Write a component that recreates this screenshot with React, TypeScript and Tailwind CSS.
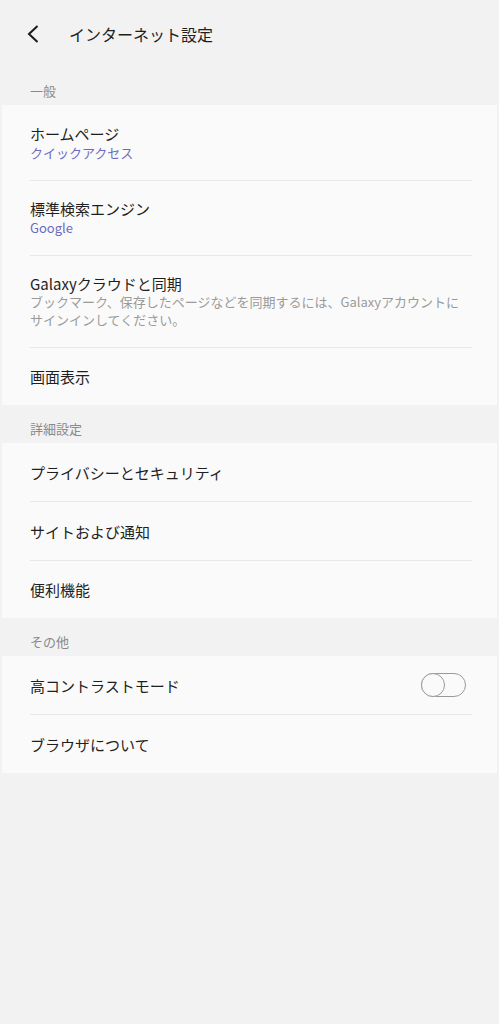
import React from 'react';

type Row = {
  title: string;
  sub?: string;
  desc?: string;
  toggle?: boolean;
  h: string;
};

const font = { fontFamily: '"Noto Sans CJK JP", "Noto Sans", sans-serif' };

function Toggle() {
  return (
    <div className="relative w-[45px] h-[24px] rounded-full border-[1.5px] border-[#9a9a9a]">
      <div className="absolute left-[-1.5px] top-[-1.5px] w-[24px] h-[24px] rounded-full border-[1.5px] border-[#9a9a9a] bg-[#fafafa]" />
    </div>
  );
}

function Section({ label, rows }: { label: string; rows: Row[] }) {
  return (
    <div>
      <div className="h-[38px] pl-[30px] pt-[15px] text-[13px] leading-[18px] text-[#8a8a8a]">{label}</div>
      <div className="mx-[2px] bg-[#fafafa] pl-[28px] pr-[25px]">
        {rows.map((r, i) => (
          <div key={i} className={`${r.h} flex items-center pr-[6px] ${i > 0 ? 'border-t border-[#e8e8e8]' : ''}`}>
            <div className="flex-1">
              <div className="text-[15px] leading-[19px] text-[#1f1f1f]">{r.title}</div>
              {r.sub && <div className="text-[13px] leading-[19px] text-[#6b6bc2]">{r.sub}</div>}
              {r.desc && <div className="text-[13px] leading-[18px] text-[#9a9a9a]">{r.desc}</div>}
            </div>
            {r.toggle && <Toggle />}
          </div>
        ))}
      </div>
    </div>
  );
}

export default function App() {
  return (
    <div className="min-h-[1024px] w-[499px] bg-[#f2f2f2]" style={font}>
      <div className="h-[67px] flex items-center">
        <svg className="ml-[27px] mr-[30px]" width="12" height="18" viewBox="0 0 12 18" fill="none">
          <path d="M10.5 1 L2 9 L10.5 17" stroke="#1a1a1a" strokeWidth="2" />
        </svg>
        <div className="text-[16px] text-[#1f1f1f]">インターネット設定</div>
      </div>
      <Section
        label="一般"
        rows={[
          { title: 'ホームページ', sub: 'クイックアクセス', h: 'h-[75px]' },
          { title: '標準検索エンジン', sub: 'Google', h: 'h-[75px]' },
          {
            title: 'Galaxyクラウドと同期',
            desc: 'ブックマーク、保存したページなどを同期するには、Galaxyアカウントにサインインしてください。',
            h: 'h-[92px]',
          },
          { title: '画面表示', h: 'h-[58px]' },
        ]}
      />
      <Section
        label="詳細設定"
        rows={[
          { title: 'プライバシーとセキュリティ', h: 'h-[58px]' },
          { title: 'サイトおよび通知', h: 'h-[59px]' },
          { title: '便利機能', h: 'h-[58px]' },
        ]}
      />
      <Section
        label="その他"
        rows={[
          { title: '高コントラストモード', toggle: true, h: 'h-[58px]' },
          { title: 'ブラウザについて', h: 'h-[59px]' },
        ]}
      />
    </div>
  );
}
